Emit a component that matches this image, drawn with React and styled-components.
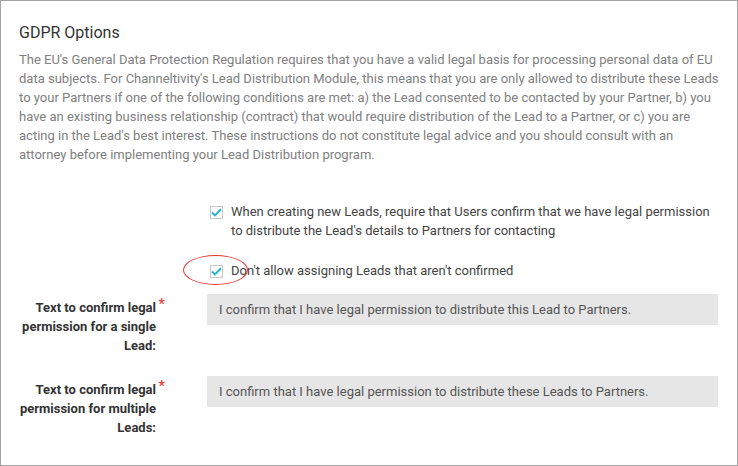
import React from "react";
import styled, { createGlobalStyle } from "styled-components";

const Global = createGlobalStyle`
  html, body { margin: 0; padding: 0; background: #fff; }
  body { font-family: Roboto, "Liberation Sans", Arial, sans-serif; }
  * { box-sizing: border-box; }
`;

const Panel = styled.div`
  width: 738px;
  height: 466px;
  border: 1px solid #a3a3a3;
  padding: 22px 19px 0 18px;
  background: #fff;
`;

const Title = styled.h2`
  margin: 0;
  font-size: 16px;
  line-height: 20px;
  font-weight: 400;
  color: #333;
`;

const Intro = styled.p`
  margin: 7px -10px 0 0;
  font-size: 13px;
  line-height: 19px;
  color: #808080;
`;

const Options = styled.div`
  margin: 38px 0 0 191px;
  display: flex;
  flex-direction: column;
  gap: 21px;
`;

const OptionRow = styled.label`
  position: relative;
  display: flex;
  align-items: flex-start;
  gap: 8px;
  font-size: 13px;
  line-height: 19px;
  color: #444;
`;

const Box = styled.span`
  flex: none;
  width: 13px;
  height: 13px;
  margin-top: 4px;
  border: 1px solid #c8c8c8;
  background: #fff;
  display: flex;
  align-items: center;
  justify-content: center;
`;

const Highlight = styled.span`
  position: absolute;
  left: -27px;
  top: -6px;
  width: 65px;
  height: 30px;
  border: 1px solid #e8322e;
  border-radius: 50%;
  pointer-events: none;
`;

const Fields = styled.div`
  margin-top: 14px;
  display: flex;
  flex-direction: column;
  gap: 21px;
`;

const FieldRow = styled.div`
  display: grid;
  grid-template-columns: 137px 1fr;
  column-gap: 51px;
  align-items: start;
`;

const Label = styled.div`
  position: relative;
  padding-top: 4px;
  text-align: right;
  font-size: 13px;
  line-height: 19px;
  font-weight: 700;
  color: #333;
`;

const Required = styled.span`
  position: absolute;
  right: -9px;
  top: 3px;
  color: #e8322e;
  font-weight: 400;
  font-size: 15px;
  line-height: 15px;
`;

const Input = styled.div`
  height: 31px;
  background: #e6e6e6;
  padding: 0 12px;
  display: flex;
  align-items: center;
  font-size: 13px;
  color: #555;
`;

const Check = () => (
  <svg width="11" height="9" viewBox="0 0 11 9">
    <path d="M1 4.6 L4 7.4 L10 1.2" fill="none" stroke="#25b3d6" strokeWidth="2" />
  </svg>
);

export default function App() {
  return (
    <>
      <Global />
      <Panel>
        <Title>GDPR Options</Title>
        <Intro>
          The EU's General Data Protection Regulation requires that you have a valid legal basis for processing personal data of EU<br />
          data subjects. For Channeltivity's Lead Distribution Module, this means that you are only allowed to distribute these Leads<br />
          to your Partners if one of the following conditions are met: a) the Lead consented to be contacted by your Partner, b) you<br />
          have an existing business relationship (contract) that would require distribution of the Lead to a Partner, or c) you are<br />
          acting in the Lead's best interest. These instructions do not constitute legal advice and you should consult with an<br />
          attorney before implementing your Lead Distribution program.
        </Intro>
        <Options>
          <OptionRow>
            <Box><Check /></Box>
            <span>
              When creating new Leads, require that Users confirm that we have legal permission to distribute the Lead's details to Partners for contacting
            </span>
          </OptionRow>
          <OptionRow>
            <Highlight />
            <Box><Check /></Box>
            <span>Don't allow assigning Leads that aren't confirmed</span>
          </OptionRow>
        </Options>
        <Fields>
          <FieldRow>
            <Label>
              Text to confirm legal permission for a single Lead:
              <Required>*</Required>
            </Label>
            <Input>I confirm that I have legal permission to distribute this Lead to Partners.</Input>
          </FieldRow>
          <FieldRow>
            <Label>
              Text to confirm legal permission for multiple Leads:
              <Required>*</Required>
            </Label>
            <Input>I confirm that I have legal permission to distribute these Leads to Partners.</Input>
          </FieldRow>
        </Fields>
      </Panel>
    </>
  );
}
